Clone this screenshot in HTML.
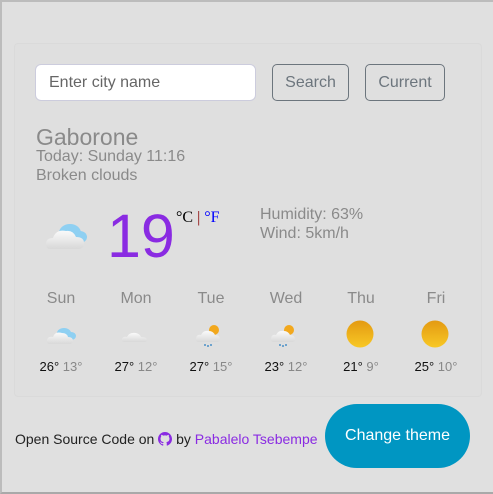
<!DOCTYPE html>
<html><head><style>
body{margin:0;width:493px;height:494px;overflow:hidden;background:#fff;font-family:"Liberation Sans",sans-serif}
.outer{position:absolute;left:0;top:0;width:491px;height:490px;border-top:2px solid #bcbcbc;border-left:2px solid #bcbcbc;border-bottom:2px solid #a9a9a9;background:#e0e0e0}
.card{position:absolute;left:14px;top:43px;width:466px;height:352px;border:1px solid #dadada;border-radius:4px;background:#dfdfdf}
.abs{position:absolute}
.inp{left:35px;top:64px;width:219px;height:35px;background:#fff;border:1px solid #ccd;border-radius:6px;color:#666;font-size:16px;line-height:35px;box-sizing:content-box}
.inp span{margin-left:13px}
.btn{top:64px;height:35px;border:1px solid #6c757d;border-radius:5px;color:#6c757d;font-size:16px;line-height:35px;text-align:center}
.grey{color:#8a8a8a}
.day{width:60px;text-align:center;font-size:16px;color:#8a8a8a}
.t{width:70px;text-align:center;font-size:13px;color:#111}
.t span{color:#888}
</style></head><body>
<div class="outer"></div>
<div class="card"></div>
<div class="abs inp"><span>Enter city name</span></div>
<div class="abs btn" style="left:272px;width:75px">Search</div>
<div class="abs btn" style="left:365px;width:78px">Current</div>
<div class="abs grey" style="left:36px;top:124px;font-size:23px">Gaborone</div>
<div class="abs grey" style="left:36px;top:147px;font-size:16px;line-height:19px">Today: Sunday 11:16<br>Broken clouds</div>
<svg class="abs" style="left:44px;top:220px" width="46" height="32"><defs><linearGradient id="g1" x1="0" y1="0" x2="0" y2="1"><stop offset="0" stop-color="#fafafa"/><stop offset="1" stop-color="#d8d8d8"/></linearGradient></defs>
<ellipse cx="26" cy="13" rx="11" ry="9" fill="#8fd0f2"/><ellipse cx="36" cy="17" rx="7" ry="6" fill="#8fd0f2"/>
<path d="M6 29 Q2 29 2 24 Q2 18 9 18 Q12 9 22 11 Q29 10 32 17 Q40 17 40 23 Q40 29 34 29Z" fill="url(#g1)"/></svg>
<div class="abs" style="left:107px;top:200px;font-size:61px;color:#8a2be2;line-height:72px">19</div>
<div class="abs" style="left:176px;top:209px;font-family:'Liberation Serif',serif;font-size:16px"><span style="color:#000">°C</span> <span style="color:#800">|</span> <span style="color:#00f">°F</span></div>
<div class="abs grey" style="left:260px;top:205px;font-size:16px;line-height:19px">Humidity: 63%<br>Wind: 5km/h</div>
<div class="abs day" style="left:31px;top:290px">Sun</div>
<div class="abs day" style="left:106px;top:290px">Mon</div>
<div class="abs day" style="left:181px;top:290px">Tue</div>
<div class="abs day" style="left:256px;top:290px">Wed</div>
<div class="abs day" style="left:331px;top:290px">Thu</div>
<div class="abs day" style="left:406px;top:290px">Fri</div>
<svg class="abs" style="left:46px;top:323px" width="30" height="24"><ellipse cx="18" cy="10" rx="7" ry="5" fill="#8fd0f2"/><ellipse cx="25" cy="13" rx="5" ry="4" fill="#8fd0f2"/><path d="M4 21 Q0 21 1 17 Q2 13 7 14 Q9 8 16 10 Q21 10 22 14 Q27 14 27 18 Q27 21 23 21Z" fill="url(#g1)"/></svg>
<svg class="abs" style="left:121px;top:326px" width="30" height="20"><path d="M4 16 Q0 16 1 13 Q2 10 6 11 Q8 6 15 7 Q19 8 20 11 Q26 11 26 14 Q26 16 23 16Z" fill="url(#g1)"/></svg>
<svg class="abs" style="left:195px;top:321px" width="30" height="28"><circle cx="19" cy="9" r="5" fill="#f2a81d"/><path d="M4 21 Q0 21 1 17 Q2 13 6 14 Q8 9 14 10 Q18 10 20 14 Q25 14 25 18 Q25 21 22 21Z" fill="url(#g1)"/><circle cx="10" cy="24" r="1" fill="#4a90c8"/><circle cx="13" cy="25" r="1" fill="#4a90c8"/><circle cx="16" cy="24" r="1" fill="#4a90c8"/></svg>
<svg class="abs" style="left:270px;top:321px" width="30" height="28"><circle cx="19" cy="9" r="5" fill="#f2a81d"/><path d="M4 21 Q0 21 1 17 Q2 13 6 14 Q8 9 14 10 Q18 10 20 14 Q25 14 25 18 Q25 21 22 21Z" fill="url(#g1)"/><circle cx="10" cy="24" r="1" fill="#4a90c8"/><circle cx="13" cy="25" r="1" fill="#4a90c8"/><circle cx="16" cy="24" r="1" fill="#4a90c8"/></svg>
<svg class="abs" style="left:346px;top:320px" width="30" height="30"><defs><linearGradient id="g2" x1="0" y1="0" x2="0" y2="1"><stop offset="0" stop-color="#e39a12"/><stop offset="1" stop-color="#f8c825"/></linearGradient></defs><circle cx="14" cy="14" r="13.5" fill="url(#g2)"/></svg>
<svg class="abs" style="left:421px;top:320px" width="30" height="30"><circle cx="14" cy="14" r="13.5" fill="url(#g2)"/></svg>
<div class="abs t" style="left:26px;top:359px">26° <span>13°</span></div>
<div class="abs t" style="left:101px;top:359px">27° <span>12°</span></div>
<div class="abs t" style="left:176px;top:359px">27° <span>15°</span></div>
<div class="abs t" style="left:251px;top:359px">23° <span>12°</span></div>
<div class="abs t" style="left:326px;top:359px">21° <span>9°</span></div>
<div class="abs t" style="left:401px;top:359px">25° <span>10°</span></div>
<div class="abs" style="left:15px;top:431px;font-size:14px;color:#222;white-space:nowrap">Open Source Code on <svg width="14" height="14" viewBox="0 0 16 16" style="vertical-align:-2px"><path fill="#8a2be2" d="M8 0C3.6 0 0 3.6 0 8c0 3.5 2.3 6.5 5.5 7.6.4.1.5-.2.5-.4v-1.4c-2.2.5-2.7-1-2.7-1-.4-.9-.9-1.2-.9-1.2-.7-.5.1-.5.1-.5.8.1 1.2.8 1.2.8.7 1.300 1.900.9 2.3.7.1-.5.3-.9.5-1.1-1.8-.2-3.6-.9-3.6-4 0-.9.3-1.6.8-2.1-.1-.2-.4-1 .1-2.1 0 0 .7-.2 2.2.8.6-.2 1.3-.3 2-.3s1.4.1 2 .3c1.5-1 2.2-.8 2.2-.8.4 1.1.2 1.9.1 2.1.5.6.8 1.3.8 2.1 0 3.1-1.9 3.7-3.6 3.9.3.3.5.8.5 1.5v2.2c0 .2.1.5.6.4C13.7 14.5 16 11.5 16 8c0-4.4-3.6-8-8-8z"/></svg> by <span style="color:#8a2be2">Pabalelo Tsebempe</span></div>
<div class="abs" style="left:325px;top:404px;width:145px;height:64px;border-radius:32px;background:#0096c2;color:#fff;font-size:16px;line-height:64px;text-align:center">Change theme</div>
</body></html>
